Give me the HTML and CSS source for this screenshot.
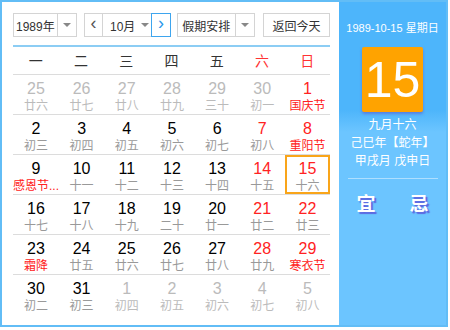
FILE: index.html
```html
<!DOCTYPE html>
<html lang="zh-CN">

<head>
    <meta charset="UTF-8">
    <title>万年历</title>
    <link rel="stylesheet" href="styles.css">
</head>

<body>

    <div class="calendar">
        <div class="main">
            <div class="toolbar">
                <div class="select year">
                    <span class="select-text">1989年</span>
                    <span class="select-arrow"></span>
                </div>
                <div class="month-group">
                    <span class="nav prev">&lsaquo;</span>
                    <span class="month">10月<span class="small-arrow"></span></span>
                    <span class="nav next">&rsaquo;</span>
                </div>
                <div class="select holiday">
                    <span class="select-text">假期安排</span>
                    <span class="select-arrow"></span>
                </div>
                <div class="btn-today">返回今天</div>
            </div>

            <div class="week-head">
                <span>一</span>
                <span>二</span>
                <span>三</span>
                <span>四</span>
                <span>五</span>
                <span class="red">六</span>
                <span class="red">日</span>
            </div>

            <div class="days">
                <div class="day other"><b>25</b><i>廿六</i></div>
                <div class="day other"><b>26</b><i>廿七</i></div>
                <div class="day other"><b>27</b><i>廿八</i></div>
                <div class="day other"><b>28</b><i>廿九</i></div>
                <div class="day other"><b>29</b><i>三十</i></div>
                <div class="day other"><b>30</b><i>初一</i></div>
                <div class="day weekend fest"><b>1</b><i>国庆节</i></div>

                <div class="day"><b>2</b><i>初三</i></div>
                <div class="day"><b>3</b><i>初四</i></div>
                <div class="day"><b>4</b><i>初五</i></div>
                <div class="day"><b>5</b><i>初六</i></div>
                <div class="day"><b>6</b><i>初七</i></div>
                <div class="day weekend"><b>7</b><i>初八</i></div>
                <div class="day weekend fest"><b>8</b><i>重阳节</i></div>

                <div class="day fest"><b>9</b><i>感恩节...</i></div>
                <div class="day"><b>10</b><i>十一</i></div>
                <div class="day"><b>11</b><i>十二</i></div>
                <div class="day"><b>12</b><i>十三</i></div>
                <div class="day"><b>13</b><i>十四</i></div>
                <div class="day weekend"><b>14</b><i>十五</i></div>
                <div class="day weekend today"><b>15</b><i>十六</i></div>

                <div class="day"><b>16</b><i>十七</i></div>
                <div class="day"><b>17</b><i>十八</i></div>
                <div class="day"><b>18</b><i>十九</i></div>
                <div class="day"><b>19</b><i>二十</i></div>
                <div class="day"><b>20</b><i>廿一</i></div>
                <div class="day weekend"><b>21</b><i>廿二</i></div>
                <div class="day weekend"><b>22</b><i>廿三</i></div>

                <div class="day fest"><b>23</b><i>霜降</i></div>
                <div class="day"><b>24</b><i>廿五</i></div>
                <div class="day"><b>25</b><i>廿六</i></div>
                <div class="day"><b>26</b><i>廿七</i></div>
                <div class="day"><b>27</b><i>廿八</i></div>
                <div class="day weekend"><b>28</b><i>廿九</i></div>
                <div class="day weekend fest"><b>29</b><i>寒衣节</i></div>

                <div class="day"><b>30</b><i>初二</i></div>
                <div class="day"><b>31</b><i>初三</i></div>
                <div class="day other"><b>1</b><i>初四</i></div>
                <div class="day other"><b>2</b><i>初五</i></div>
                <div class="day other"><b>3</b><i>初六</i></div>
                <div class="day other"><b>4</b><i>初七</i></div>
                <div class="day other"><b>5</b><i>初八</i></div>
            </div>
        </div>

        <div class="side">
            <div class="side-date">1989-10-15 星期日</div>
            <div class="big-day">15</div>
            <div class="lunar-info">
                <p>九月十六</p>
                <p>己巳年【蛇年】</p>
                <p>甲戌月 戊申日</p>
            </div>
            <div class="yiji">
                <span>宜</span>
                <span>忌</span>
            </div>
        </div>
    </div>

</body>

</html>
```

FILE: styles.css
```css
body {
    margin: 0;
    padding: 0;
    background-color: #fff;
    font-family: 'Liberation Sans', 'Noto Sans CJK SC', sans-serif;
}

.calendar {
    width: 448px;
    height: 327px;
    box-sizing: border-box;
    border: 2px solid #62bdf6;
    display: flex;
    background-color: #fff;
}

.main {
    width: 337px;
    box-sizing: border-box;
    padding: 11px 9px 0 11px;
}

/* toolbar */

.toolbar {
    display: flex;
    height: 24px;
    font-size: 12px;
    color: #333;
    padding-bottom: 8px;
    border-bottom: 2px solid #8ccdf4;
    white-space: nowrap;
}

.select {
    display: flex;
    height: 24px;
    box-sizing: border-box;
    border: 1px solid #d4d4d4;
    background-color: #fff;
}

.select-text {
    display: flex;
    align-items: center;
    justify-content: center;
    border-right: 1px solid #d4d4d4;
}

.select-arrow {
    width: 19px;
    display: flex;
    align-items: center;
    justify-content: center;
}

.select-arrow::before,
.small-arrow::before {
    content: "";
    border-left: 4px solid transparent;
    border-right: 4px solid transparent;
    border-top: 4px solid #888;
}

.year {
    width: 64px;
}

.year .select-text {
    width: 44px;
}

.month-group {
    display: flex;
    margin-left: 7px;
}

.nav {
    width: 19px;
    height: 24px;
    box-sizing: border-box;
    border: 1px solid #d4d4d4;
    display: flex;
    align-items: center;
    justify-content: center;
    font-size: 18px;
    color: #555;
    padding-bottom: 3px;
}

.nav.next {
    width: 20px;
    border-color: #3ea5ee;
    color: #2a98ea;
}

.month {
    width: 48px;
    height: 24px;
    box-sizing: border-box;
    border-top: 1px solid #d4d4d4;
    border-bottom: 1px solid #d4d4d4;
    display: flex;
    align-items: center;
    padding-left: 7px;
    gap: 6px;
}

.small-arrow {
    display: flex;
    align-items: center;
}

.holiday {
    width: 78px;
    margin-left: 6px;
}

.holiday .select-text {
    width: 58px;
}

.btn-today {
    width: 67px;
    height: 24px;
    box-sizing: border-box;
    margin-left: 8px;
    border: 1px solid #d4d4d4;
    display: flex;
    align-items: center;
    justify-content: center;
}

/* week header */

.week-head {
    display: grid;
    grid-template-columns: repeat(7, 1fr);
    height: 27px;
    border-bottom: 1px solid #dcdcdc;
    font-size: 14px;
    color: #333;
    text-align: center;
    line-height: 28px;
}

.red {
    color: #f33;
}

/* days */

.days {
    display: grid;
    grid-template-columns: repeat(7, 1fr);
    grid-auto-rows: 40px;
}

.day {
    box-sizing: border-box;
    border-bottom: 1px solid #dcdcdc;
    display: flex;
    flex-direction: column;
    align-items: center;
    padding-top: 5px;
}

.days .day:nth-last-child(-n+7) {
    border-bottom: none;
}

.day b {
    font-weight: normal;
    font-size: 16px;
    line-height: 18px;
    color: #000;
}

.day i {
    font-style: normal;
    font-size: 12px;
    line-height: 16px;
    color: #999;
    white-space: nowrap;
}

.day.weekend b {
    color: #f22;
}

.day.fest i {
    color: #f22;
}

.day.other b,
.day.other i {
    color: #bbb;
}

.day.today {
    box-shadow: inset 0 0 0 2px #f9a51a;
}

/* side panel */

.side {
    flex: 1;
    background: linear-gradient(#4db5fb 0, #4db5fb 108px, #6cc5ff 130px, #6cc5ff 100%);
    color: #fff;
    display: flex;
    flex-direction: column;
    align-items: center;
    padding-top: 18px;
}

.side-date {
    font-size: 11px;
    line-height: 16px;
    white-space: nowrap;
}

.big-day {
    width: 61px;
    height: 65px;
    margin-top: 11px;
    background-color: #ffa300;
    border-radius: 2px;
    box-shadow: 0 2px 3px rgba(90, 90, 210, 0.6);
    font-size: 50px;
    line-height: 66px;
    text-align: center;
}

.lunar-info {
    margin-top: 4px;
    width: 90px;
    padding-bottom: 8px;
    border-bottom: 1px solid rgba(255, 255, 255, 0.45);
    text-align: center;
    font-size: 12px;
}

.lunar-info p {
    margin: 0;
    line-height: 18px;
}

.yiji {
    display: flex;
    gap: 34px;
    margin-top: 10px;
    font-size: 19px;
    font-weight: bold;
    text-shadow: 2px 2px 1px #5c66e0;
}
```
